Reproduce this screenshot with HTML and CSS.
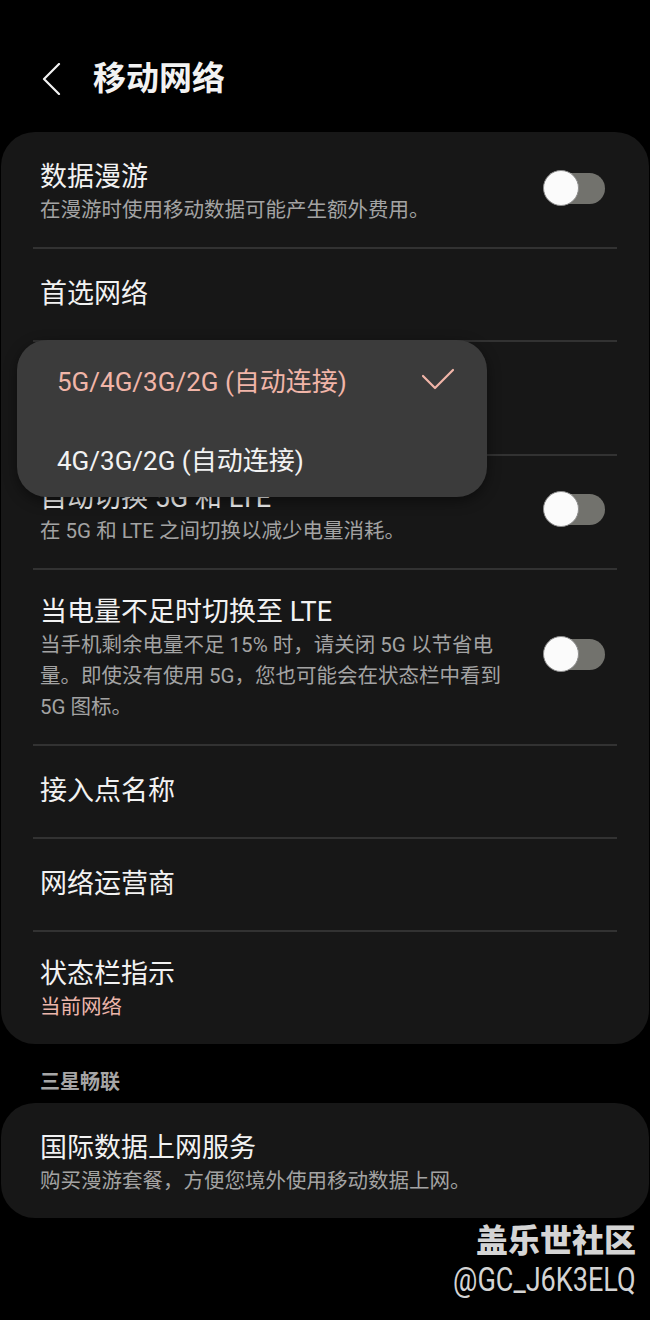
FILE: index.html
```html
<!DOCTYPE html>
<html lang="zh-CN">
<head>
  <meta charset="UTF-8">
  <meta name="viewport" content="width=device-width, initial-scale=1.0">
  <title>移动网络</title>
  <link rel="stylesheet" href="styles.css">
</head>
<body>
  <header class="topbar">
    <svg class="back" width="20" height="32" viewBox="0 0 20 32">
      <path d="M17 1 L2 16 L17 31" fill="none" stroke="#f2f2f2" stroke-width="2.2" stroke-linecap="round" stroke-linejoin="round"/>
    </svg>
    <h1>移动网络</h1>
  </header>

  <section class="card first">
    <!-- 首选网络 弹出菜单 -->
    <div class="menu">
      <div class="option selected">
        <span>5G/4G/3G/2G (自动连接)</span>
        <svg class="check" width="34" height="22" viewBox="0 0 34 22">
          <path d="M2 8 L14 20 L32 2" fill="none" stroke="#f1b5a8" stroke-width="2.2" stroke-linecap="round" stroke-linejoin="round"/>
        </svg>
      </div>
      <div class="option">
        <span>4G/3G/2G (自动连接)</span>
      </div>
    </div>

    <div class="row">
      <div class="text">
        <div class="title">数据漫游</div>
        <div class="sub">在漫游时使用移动数据可能产生额外费用。</div>
      </div>
      <span class="toggle"></span>
    </div>

    <div class="row single">
      <div class="title">首选网络</div>
    </div>

    <!-- 被弹出菜单盖住的一行 -->
    <div class="row covered"></div>

    <div class="row">
      <div class="text">
        <div class="title">自动切换 5G 和 LTE</div>
        <div class="sub">在 5G 和 LTE 之间切换以减少电量消耗。</div>
      </div>
      <span class="toggle"></span>
    </div>

    <div class="row">
      <div class="text">
        <div class="title">当电量不足时切换至 LTE</div>
        <div class="sub">当手机剩余电量不足 15% 时，请关闭 5G 以节省电量。即使没有使用 5G，您也可能会在状态栏中看到 5G 图标。</div>
      </div>
      <span class="toggle"></span>
    </div>

    <div class="row single">
      <div class="title">接入点名称</div>
    </div>

    <div class="row single">
      <div class="title">网络运营商</div>
    </div>

    <div class="row">
      <div class="text">
        <div class="title">状态栏指示</div>
        <div class="sub accent">当前网络</div>
      </div>
    </div>
  </section>

  <h2 class="section-label">三星畅联</h2>

  <section class="card">
    <div class="row">
      <div class="text">
        <div class="title">国际数据上网服务</div>
        <div class="sub">购买漫游套餐，方便您境外使用移动数据上网。</div>
      </div>
    </div>
  </section>

  <div class="watermark">
    <div class="wm-name">盖乐世社区</div>
    <div class="wm-id">@GC_J6K3ELQ</div>
  </div>
</body>
</html>
```

FILE: styles.css
```css
body {
  margin: 0;
  background: #000;
  color: #f2f2f2;
  font-family: Roboto, "Noto Sans CJK SC", sans-serif;
}

.topbar {
  display: flex;
  align-items: center;
  height: 46px;
  padding: 56px 0 30px 42px;
}

.back {
  display: block;
  margin-right: 31px;
}

h1 {
  margin: 0;
  font-size: 33px;
  font-weight: 700;
  line-height: 46px;
}

.card {
  position: relative;
  margin: 0 1px;
  padding: 3px 32px 0;
  background: #171717;
  border-radius: 34px;
}

.row {
  display: flex;
  align-items: center;
  padding: 24px 12px 21px 7px;
  border-bottom: 2px solid #323232;
}

.row:last-child {
  padding-bottom: 21px;
  border-bottom: none;
}

.row.single {
  padding: 27px 12px 28px 7px;
}

.row.covered {
  height: 67px;
}

.text {
  flex: 1;
  margin-right: 30px;
}

.title {
  font-size: 27px;
  line-height: 36px;
}

.sub {
  font-size: 20.5px;
  line-height: 31px;
  color: #a3a3a3;
}

.sub.accent {
  color: #ecb6ab;
}

/* 开关 */
.toggle {
  position: relative;
  flex: none;
  width: 52px;
  height: 31px;
  margin: 0 0 9px 10px;
  border-radius: 16px;
  background: #72726d;
}

.toggle::before {
  content: "";
  position: absolute;
  left: -10px;
  top: -3px;
  width: 34px;
  height: 34px;
  border: 1.5px solid #8c8c8c;
  border-radius: 50%;
  background: #fbfbfb;
}

/* 弹出菜单 */
.menu {
  position: absolute;
  z-index: 1;
  left: 16px;
  top: 208px;
  width: 470px;
  height: 157px;
  background: #3b3b3b;
  border-radius: 30px;
  box-shadow: 0 4px 14px rgba(0, 0, 0, 0.45);
}

.option {
  display: flex;
  align-items: center;
  justify-content: space-between;
  height: 79px;
  padding: 0 32px 0 40px;
  font-size: 26px;
}

.option + .option {
  height: 78px;
}

.option.selected {
  color: #f1b5a8;
}

.check {
  display: block;
  margin-bottom: 2px;
}

.section-label {
  margin: 0;
  padding: 25px 40px 8px;
  font-size: 20px;
  font-weight: 700;
  line-height: 26px;
  color: #a6a6a6;
}

.watermark {
  padding: 3px 14px 0 0;
  text-align: right;
  color: #d4d4d4;
}

.wm-name {
  font-size: 32px;
  font-weight: 900;
  line-height: 40px;
}

.wm-id {
  display: inline-block;
  font-size: 33px;
  line-height: 38px;
  transform: scaleX(0.82);
  transform-origin: right center;
}
```
